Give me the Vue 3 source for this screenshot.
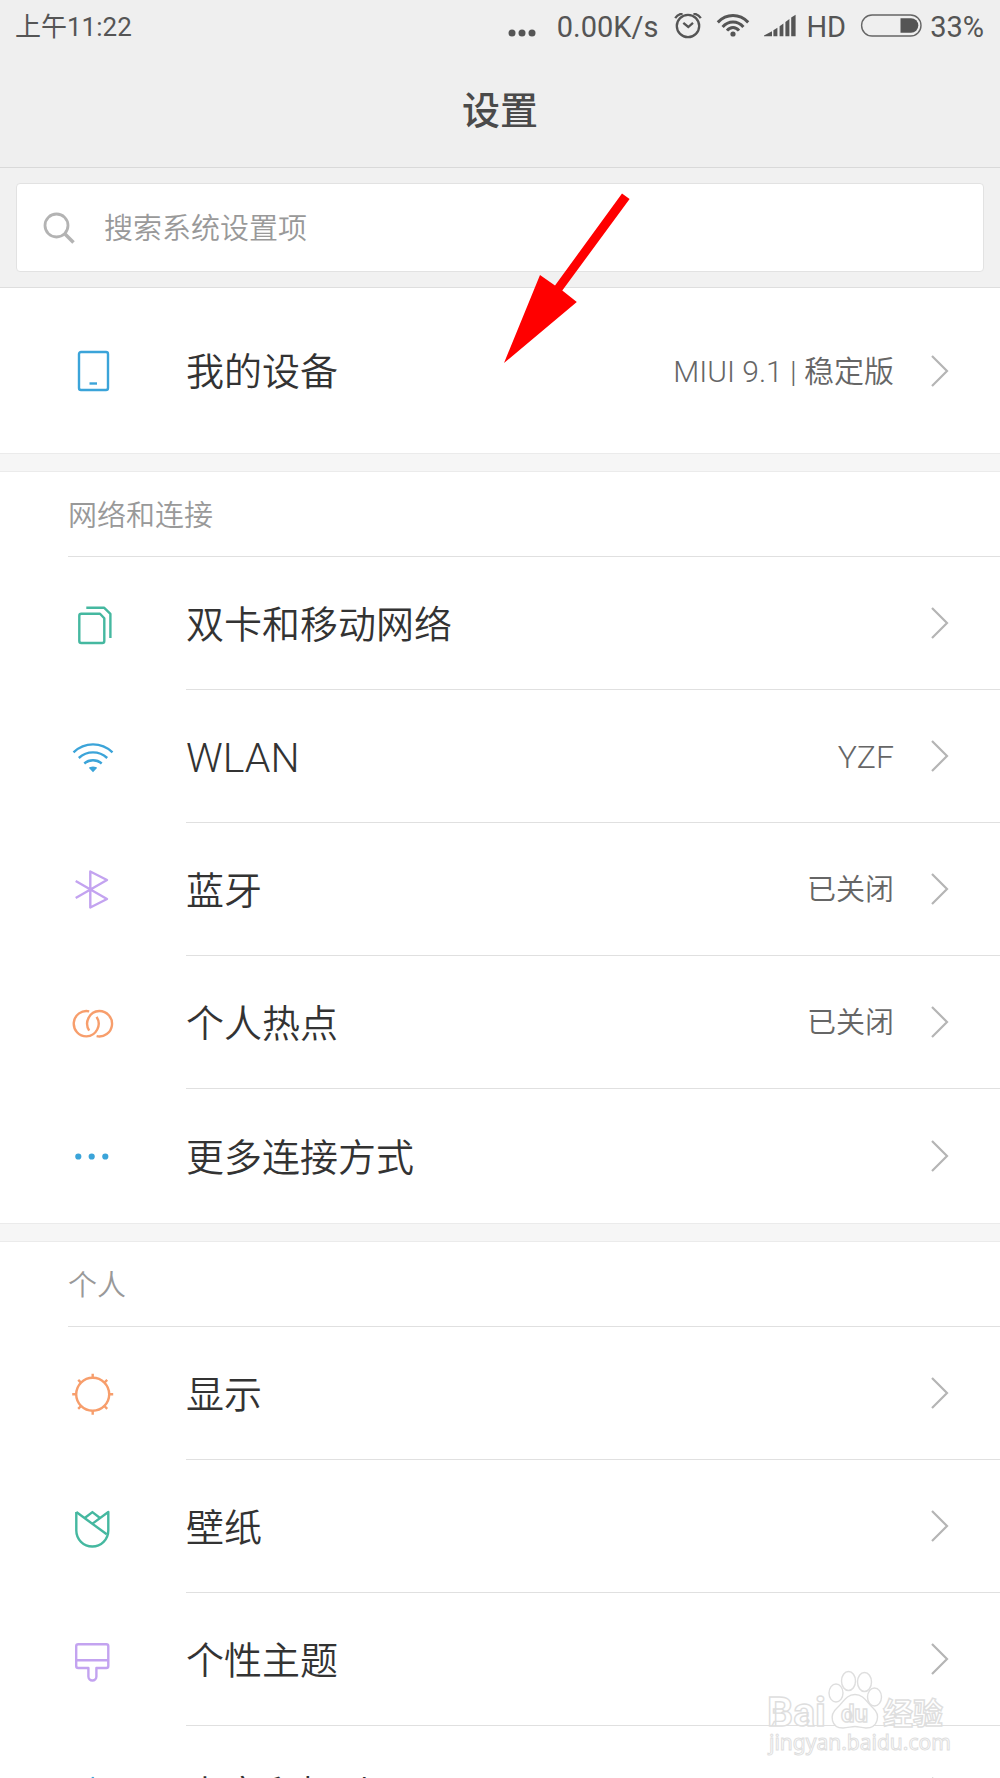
<script setup>
const device = { id: 'device', label: '我的设备', value: 'MIUI 9.1 | 稳定版' }

const sections = [
  {
    title: '网络和连接',
    rows: [
      { id: 'sim', label: '双卡和移动网络' },
      { id: 'wlan', label: 'WLAN', value: 'YZF', latin: true },
      { id: 'bluetooth', label: '蓝牙', value: '已关闭' },
      { id: 'hotspot', label: '个人热点', value: '已关闭' },
      { id: 'more', label: '更多连接方式' },
    ],
  },
  {
    title: '个人',
    rows: [
      { id: 'display', label: '显示' },
      { id: 'wallpaper', label: '壁纸' },
      { id: 'theme', label: '个性主题' },
      { id: 'sound', label: '声音和振动' },
    ],
  },
]

const blue = '#3ba4d9'
const green = '#45b8a0'
const purple = '#c3a3f0'
const orange = '#f79e6c'

const icons = {
  device: { color: blue, paths: ['M12 5H37a2 2 0 0 1 2 2V41a2 2 0 0 1-2 2H12a2 2 0 0 1-2-2V7a2 2 0 0 1 2-2Z', 'M20.5 36.5H28'] },
  sim: { color: green, paths: ['M12 13.7H31L35.3 18.3V41a2 2 0 0 1-2 2H12.3a2 2 0 0 1-2-2V15.7a2 2 0 0 1 2-2Z', 'M17.3 7.7H35L41.4 13.9V38'] },
  wlan: { color: blue, paths: ['M4.5 19.3Q13 11.4 24 11.4T43.5 19.3', 'M9.8 25Q16 19.4 24 19.4T38.2 25', 'M15.3 30.5Q19 27.3 24 27.3T32.7 30.5'], solid: 'M20 35Q20.500 33.5 24 33.5T28 35L24 39.2Z' },
  bluetooth: { color: purple, paths: ['M6.7 15L38 33L21.3 41.5V5.5L38 14L6.7 32'] },
  hotspot: {
    color: orange,
    paths: [
      'M20.2 12.3A12.7 12.7 0 1 0 17.5 37.4A12.7 12.7 0 0 0 27.6 17.8',
      'M27.6 37.1A12.7 12.7 0 1 0 30.3 12A12.7 12.7 0 0 0 20.2 31.6',
    ],
  },
  more: { color: blue, paths: [], solid: 'M6.2 24.5a3.1 3.1 0 1 1 6.2 0a3.1 3.1 0 1 1-6.2 0ZM19.6 24.5a3.1 3.1 0 1 1 6.2 0a3.1 3.1 0 1 1-6.2 0ZM33.2 24.5a3.1 3.1 0 1 1 6.2 0a3.1 3.1 0 1 1-6.2 0Z' },
  display: { color: orange, paths: ['M7.2 24.3a16.5 16.5 0 1 1 33 0a16.5 16.5 0 1 1-33 0Z', 'M23.7 7.8V3.8M23.7 40.8V44.8M7.2 24.3H3.2M40.2 24.3H44.2M12 12.6L9.2 9.8M35.4 12.6L38.2 9.8M12 36L9.2 38.8M35.4 36L38.2 38.8'] },
  wallpaper: { color: green, paths: ['M7.3 9V27.5A16 16 0 0 0 39.3 27.5V9L23.5 20.6', 'M7.3 9L37.7 31.3', 'M15.4 15.2L23.4 9.1L31 15'] },
  theme: { color: purple, paths: ['M9 8.3H37.3a2 2 0 0 1 2 2V30a2 2 0 0 1-2 2H27.4V40.5a4 4 0 0 1-8 0V32H9.2a2 2 0 0 1-2-2V10.3a2 2 0 0 1 2-2Z', 'M7.3 24.3H39.3'] },
  sound: { color: blue, paths: ['M7 18H14L24 9V39L14 30H7Z', 'M32 17Q37 24 32 31'] },
}
</script>

<template>
  <div class="screen">
    <header class="top">
      <div class="status">
        <span class="time">上午11:22</span>
        <svg class="dots" width="30" height="28" viewBox="0 0 30 28" fill="#555">
          <circle cx="5" cy="20" r="3.5" /><circle cx="15" cy="20" r="3.5" /><circle cx="25" cy="20" r="3.5" />
        </svg>
        <span class="speed">0.00K/s</span>
        <svg class="alarm" width="28" height="28" viewBox="0 0 28 28" fill="none" stroke="#555" stroke-width="2.3">
          <circle cx="14" cy="13" r="11.2" />
          <path d="M9.3 9.8L14.3 14L19 9.8M1.2 5.2Q3.8 1.2 8.6 .5M26.8 5.2Q24.2 1.2 19.4 .5" />
        </svg>
        <svg class="wifi" width="34" height="28" viewBox="0 1 34 28" fill="none" stroke="#555" stroke-width="3">
          <path d="M1.8 10.4Q8.4 3.6 17 3.6T32.2 10.4M6.6 15Q11 10 17 10T27.4 15M11 18.6Q13.6 15.4 17 15.4T23 18.6" />
          <circle cx="17" cy="22" r="2.6" fill="#555" stroke="none" />
        </svg>
        <svg class="signal" width="32" height="28" viewBox="0 1 32 28" fill="#555">
          <path d="M0 24.3V23.6L8 19.3V24.3ZM9.4 24.3V18.3L13.4 15.8V24.3ZM15.6 24.3V14.2L19.4 11.4V24.3ZM21.4 24.3V10L25.4 7V24.3ZM27.2 24.3V5.6L31.6 2.8V24.3Z" />
        </svg>
        <span class="hd">HD</span>
        <svg class="battery" width="62" height="28" viewBox="0 1 62 28" fill="none">
          <rect x="1.6" y="3" width="59.4" height="21" rx="10.5" stroke="#666" stroke-width="1.4" />
          <path d="M40.5 6.2H51a7.3 7.3 0 0 1 0 14.6H40.5Z" fill="#555" />
        </svg>
        <span>33%</span>
      </div>
      <h1>设置</h1>
    </header>

    <form class="search" @submit.prevent>
      <label class="box">
        <svg width="34" height="34" viewBox="0 0 34 34" fill="none" stroke="#b3b3b3">
          <circle cx="14.5" cy="14.5" r="11.5" stroke-width="2.8" />
          <path d="M22.5 22.5L31.5 31.5" stroke-width="3.6" />
        </svg>
        <input type="search" aria-label="搜索系统设置项" placeholder="搜索系统设置项" />
      </label>
    </form>

    <main class="list">
      <a class="row tall" href="#device">
        <svg class="icon" viewBox="0 0 48 48" :stroke="icons.device.color">
          <path v-for="d in icons.device.paths" :key="d" :d="d" />
        </svg>
        <span class="body">
          <span class="label">{{ device.label }}</span>
          <span class="value">{{ device.value }}</span>
          <svg class="chevron" viewBox="0 0 20 34"><path d="M2 2L17 17L2 32" /></svg>
        </span>
      </a>

      <section v-for="section in sections" :key="section.title">
        <h2>{{ section.title }}</h2>
        <a v-for="row in section.rows" :key="row.id" class="row" :href="'#' + row.id">
          <svg class="icon" viewBox="0 0 48 48" :stroke="icons[row.id].color">
            <path v-for="d in icons[row.id].paths" :key="d" :d="d" />
            <path v-if="icons[row.id].solid" :d="icons[row.id].solid" :fill="icons[row.id].color" stroke="none" />
          </svg>
          <span class="body" :class="{ latin: row.latin }">
            <span class="label">{{ row.label }}</span>
            <span v-if="row.value" class="value">{{ row.value }}</span>
            <svg class="chevron" viewBox="0 0 20 34"><path d="M2 2L17 17L2 32" /></svg>
          </span>
        </a>
      </section>
    </main>

    <svg class="arrow" width="126" height="170" viewBox="0 0 126 170" fill="#f00">
      <path d="M0 170L36 82L51 92.5L118 .5L125.6 6L58.3 97.5L72.8 109Z" />
    </svg>

    <svg class="watermark" width="190" height="92" viewBox="0 0 190 92">
      <g fill="#fff" stroke="#dedede" stroke-width="1.4">
        <ellipse cx="75" cy="28" rx="7" ry="9" />
        <ellipse cx="87.5" cy="16" rx="7" ry="9.5" />
        <ellipse cx="103.5" cy="17" rx="7" ry="9.5" />
        <ellipse cx="113.5" cy="32" rx="7" ry="9" />
        <path d="M94 29.5C103 29.5 106 38 112 43C120 50 117 63 105 63C100 63 98 61.5 94 61.5S87 63 82 63C70 63 68 50 76 43C82 38 85 29.5 94 29.5Z" />
      </g>
      <text x="6" y="61" font-size="41">Bai</text>
      <text x="80" y="57" font-size="24">du</text>
      <text x="122" y="59" font-size="30">经验</text>
      <text class="url" x="8" y="85" font-size="21">jingyan.baidu.com</text>
    </svg>
  </div>
</template>

<style>
body {
  margin: 0;
  background: #fff;
}
</style>

<style scoped>
.screen {
  position: relative;
  display: flex;
  flex-direction: column;
  height: 100vh;
  overflow: hidden;
  background: #fff;
  font-family: Roboto, "Noto Sans CJK SC", sans-serif;
}

.top {
  flex: none;
  background: #efefef;
  border-bottom: 1px solid #d9d9d9;
}

.status {
  display: flex;
  align-items: center;
  height: 54px;
  padding: 0 16px 0 15px;
  color: #555;
  font-size: 29px;
  line-height: 54px;
}

.time {
  margin-right: auto;
  font-size: 26px;
}

.speed {
  margin: 0 16px 0 20px;
}

.wifi {
  margin: 0 14px;
}

.hd {
  margin: 0 14px 0 10px;
}

.battery {
  margin-right: 8px;
}

h1 {
  margin: 0;
  padding: 29px 0 28px;
  color: #4a4a4a;
  font-size: 38px;
  font-weight: 500;
  line-height: 56px;
  text-align: center;
}

.search {
  flex: none;
  padding: 15px 16px;
  background: #f1f1f1;
  border-bottom: 1px solid #dedede;
}

.box {
  display: flex;
  align-items: center;
  gap: 28px;
  height: 87px;
  padding-left: 25px;
  background: #fff;
  border: 1px solid #e2e2e2;
  border-radius: 4px;
}

.box input {
  flex: 1;
  min-width: 0;
  padding: 2px 0 0;
  border: 0;
  outline: 0;
  background: none;
  color: #333;
  font: inherit;
  font-size: 29px;
}

.box input::placeholder {
  color: #999;
  font-weight: 350;
  opacity: 1;
}

.list {
  flex: 1;
  min-height: 0;
  overflow: hidden;
}

section::before {
  content: "";
  display: block;
  box-sizing: border-box;
  height: 19px;
  background: #f6f6f6;
  border: solid #ebebeb;
  border-width: 1px 0;
}

h2 {
  margin: 0 0 0 68px;
  padding-top: 4px;
  border-bottom: 1px solid #e0e0e0;
  color: #999;
  font-size: 29px;
  font-weight: 350;
  line-height: 80px;
}

.row {
  display: flex;
  align-items: center;
  height: 133px;
  padding-left: 69px;
  color: #333;
  text-decoration: none;
}

.row.tall {
  height: 165px;
}

section .row:last-child {
  height: 134px;
}

.icon {
  flex: none;
  width: 48px;
  height: 48px;
  fill: none;
  stroke-width: 2.4;
  stroke-linejoin: round;
}

.body {
  display: flex;
  flex: 1;
  align-items: center;
  box-sizing: border-box;
  height: 100%;
  margin-left: 69px;
  padding-right: 50px;
  border-bottom: 1px solid #e0e0e0;
}

.tall .body,
.row:last-child .body {
  border-bottom: 0;
}

.label,
.value {
  padding-bottom: 4px;
  font-weight: 350;
}

.label {
  font-size: 38px;
}

.value {
  margin-left: auto;
  color: #666;
  font-size: 29px;
}

.tall .value {
  font-size: 30px;
}

.latin .label {
  padding: 4px 0 0;
  font-size: 41px;
  font-weight: 300;
}

.latin .value {
  padding: 2px 0 0;
  font-size: 32px;
  font-weight: 300;
}

.chevron {
  width: 20px;
  height: 34px;
  margin-left: auto;
  fill: none;
  stroke: #b5b5b5;
  stroke-width: 2.2;
}

.value + .chevron {
  margin-left: 36px;
}

.arrow {
  position: absolute;
  top: 193px;
  left: calc(50% + 4px);
}

.watermark {
  position: absolute;
  right: 49px;
  bottom: 21px;
  fill: #fff;
  stroke: #dedede;
  stroke-width: 1.4;
  font-weight: 700;
}

.watermark .url {
  font-family: "Noto Sans", sans-serif;
  font-weight: 400;
  stroke-width: 1;
}
</style>
